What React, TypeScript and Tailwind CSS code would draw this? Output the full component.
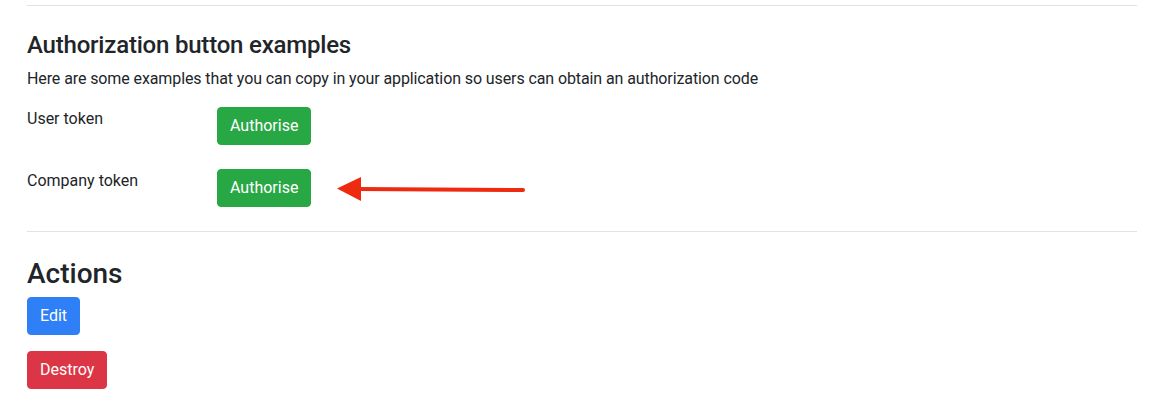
import React from "react";

export default function App() {
  const font = { fontFamily: "Roboto, 'Liberation Sans', sans-serif" };
  return (
    <div className="bg-white w-[1151px] h-[399px] overflow-hidden text-[#212529]" style={font}>
      <div className="ml-[27px] w-[1110px] relative">
        <div className="h-[5px]" />
        <hr className="border-0 border-t border-[#e2e2e2]" />
        <h4 className="text-[24px] leading-[28.8px] font-medium tracking-[-0.2px] mt-[25px] mb-[7px]">Authorization button examples</h4>
        <p className="text-[16px] leading-6 tracking-[-0.1px] mb-4">
          Here are some examples that you can copy in your application so users can obtain an authorization code
        </p>
        <div className="flex items-start mb-6">
          <div className="w-[190px] text-[16px] leading-6">User token</div>
          <button className="bg-[#28a745] text-white text-[16px] leading-6 px-3 py-[6px] border border-[#28a745] rounded">
            Authorise
          </button>
        </div>
        <div className="flex items-start mb-6 relative">
          <div className="w-[190px] text-[16px] leading-6">Company token</div>
          <button className="bg-[#28a745] text-white text-[16px] leading-6 px-3 py-[6px] border border-[#28a745] rounded">
            Authorise
          </button>
          <svg className="absolute left-[310px] top-[7px]" width="190" height="26" viewBox="0 0 190 26">
            <line x1="20" y1="13" x2="186" y2="14" stroke="#ee2a10" strokeWidth="4" strokeLinecap="round" />
            <polygon points="0,12.5 24,1 24,25" fill="#ee2a10" />
          </svg>
        </div>
        <hr className="border-0 border-t border-[#e2e2e2]" />
        <h3 className="text-[28px] leading-[33.6px] font-medium mt-[25px] mb-[7px]">Actions</h3>
        <div className="mb-4">
          <button className="bg-[#2f80f6] text-white text-[16px] leading-6 px-3 py-[6px] border border-[#2f80f6] rounded">
            Edit
          </button>
        </div>
        <div>
          <button className="bg-[#dc3545] text-white text-[16px] leading-6 px-3 py-[6px] border border-[#dc3545] rounded">
            Destroy
          </button>
        </div>
      </div>
    </div>
  );
}
